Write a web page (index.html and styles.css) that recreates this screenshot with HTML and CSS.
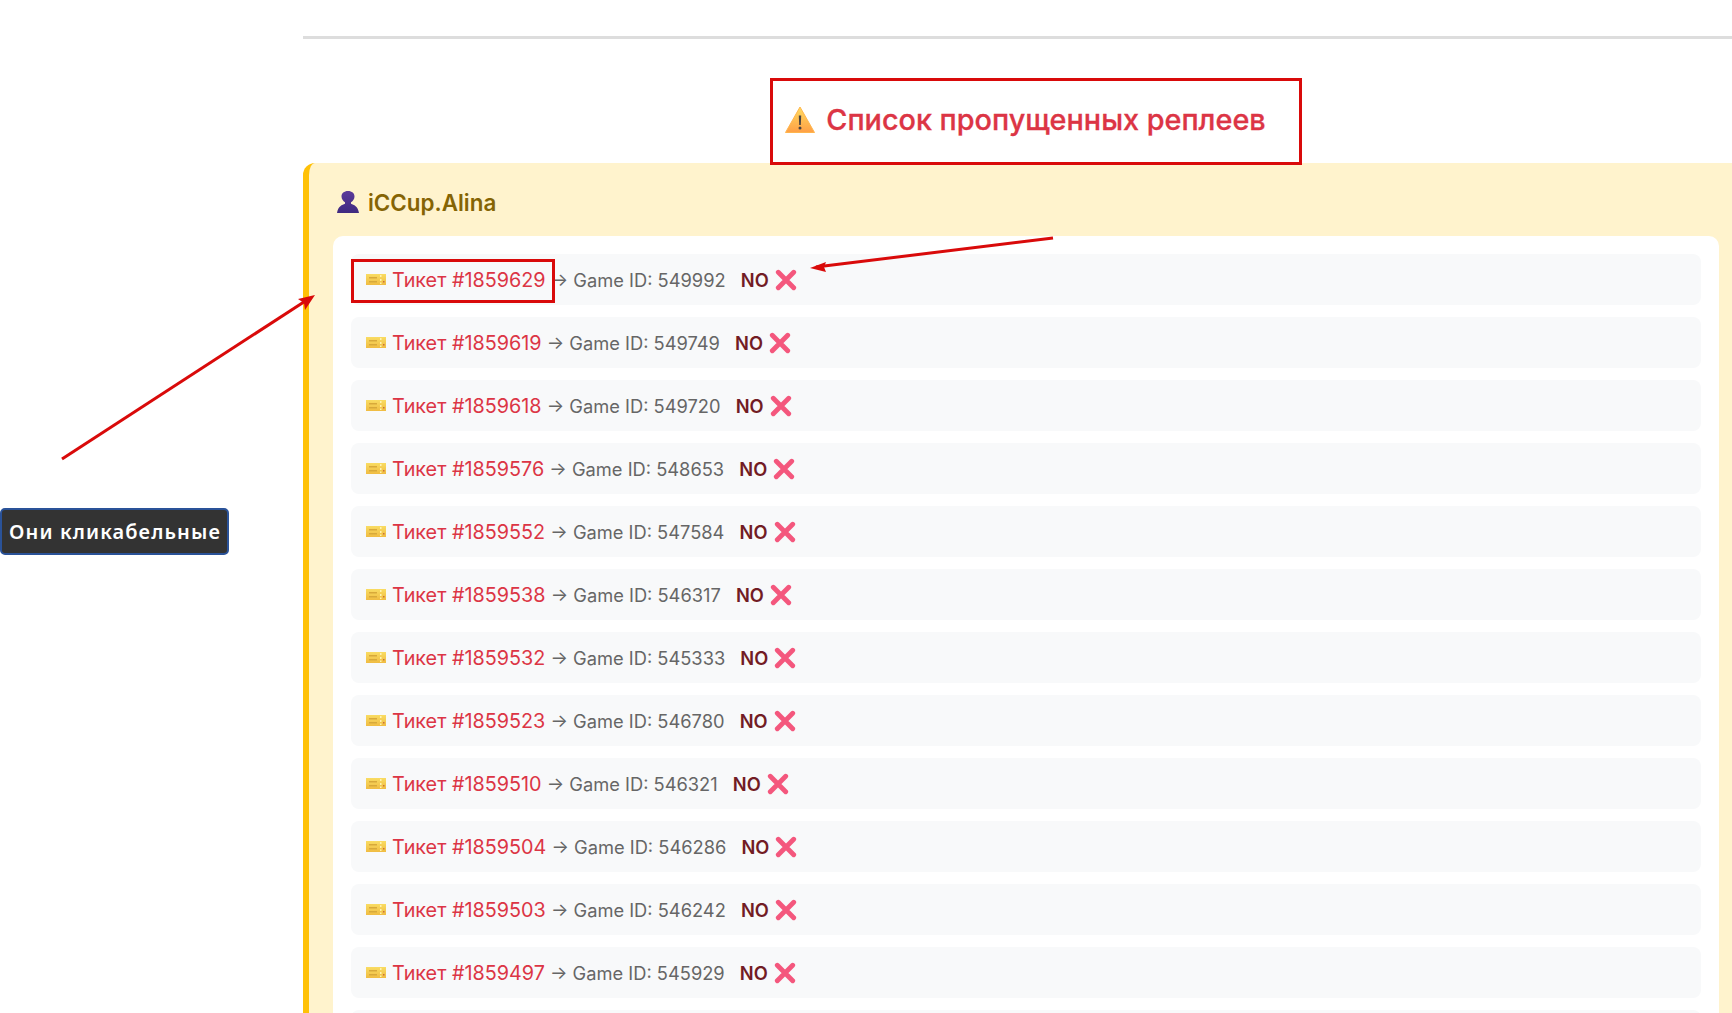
FILE: index.html
```html
<!DOCTYPE html>
<html lang="en">
<head>
  <meta charset="UTF-8" />
  <title>Список пропущенных реплеев</title>
  <link rel="stylesheet" href="styles.css">
</head>
<body>
  <!-- icons -->
  <svg class="sprite" width="0" height="0">
    <defs>
      <linearGradient id="ticketFill" x1="0" y1="0" x2="0" y2="1">
        <stop offset="0" stop-color="#f9dc62"/>
        <stop offset="1" stop-color="#f0bc42"/>
      </linearGradient>
      <linearGradient id="warnFill" x1="0" y1="0" x2="0" y2="1">
        <stop offset="0" stop-color="#ffdc60"/>
        <stop offset="1" stop-color="#ff9f45"/>
      </linearGradient>
      <linearGradient id="userFill" x1="0" y1="0" x2="0" y2="1">
        <stop offset="0" stop-color="#5c3a9a"/>
        <stop offset="1" stop-color="#3f2a80"/>
      </linearGradient>
    </defs>
    <symbol id="icon-ticket" viewBox="0 0 20 11">
      <path d="M0 0h20v11H0z" fill="url(#ticketFill)"/>
      <path d="M3 3h8v1.500H3zM3 7h8v1.500H3z" fill="#d8a93a"/>
      <path d="M14 1h1.500v2H14zM14 5h1.500v2H14zM14 8.500h1.500V10H14z" fill="#fff3b0"/>
      <path d="M17 7h1.500v1.500H17z" fill="#c9703a"/>
    </symbol>
    <symbol id="icon-cross" viewBox="0 0 20 20">
      <path d="M3 3l14 14M17 3L3 17" stroke="#f4577d" stroke-width="4.400" stroke-linecap="round" fill="none"/>
    </symbol>
  </svg>

  <main class="page">
    <hr class="divider">

    <h2 class="title">
      <svg class="title-icon" viewBox="0 0 30 27">
        <path d="M15 1L29.500 26.500H.5z" fill="url(#warnFill)" stroke="#ffb54d" stroke-linejoin="round"/>
        <path d="M13.800 9.500h2.400l-.4 9.500h-1.600z" fill="#4a4340"/>
        <circle cx="15" cy="22" r="1.500" fill="#4a4340"/>
      </svg>
      Список пропущенных реплеев
    </h2>

    <section class="user-panel">
      <h3 class="user-name">
        <svg class="user-icon" viewBox="0 0 22 22">
          <path d="M11 0c4 0 6.500 2.300 6.500 5.500 0 2.500-1.500 4.500-3.500 5.700v1.500c2.800 1 6.900 2.300 8 9.300H0c1.100-7 5.200-8.300 8-9.300v-1.500C6 10 4.500 8 4.500 5.500 4.500 2.300 7 0 11 0z" fill="url(#userFill)"/>
        </svg>
        iCCup.Alina
      </h3>

      <ul class="ticket-list">
        <li class="ticket-row"><svg class="ticket-icon"><use href="#icon-ticket"/></svg><a class="ticket-link" href="#">Тикет #1859629</a> → Game ID: 549992 <span class="no-label">NO</span><svg class="cross-icon"><use href="#icon-cross"/></svg></li>
        <li class="ticket-row"><svg class="ticket-icon"><use href="#icon-ticket"/></svg><a class="ticket-link" href="#">Тикет #1859619</a> → Game ID: 549749 <span class="no-label">NO</span><svg class="cross-icon"><use href="#icon-cross"/></svg></li>
        <li class="ticket-row"><svg class="ticket-icon"><use href="#icon-ticket"/></svg><a class="ticket-link" href="#">Тикет #1859618</a> → Game ID: 549720 <span class="no-label">NO</span><svg class="cross-icon"><use href="#icon-cross"/></svg></li>
        <li class="ticket-row"><svg class="ticket-icon"><use href="#icon-ticket"/></svg><a class="ticket-link" href="#">Тикет #1859576</a> → Game ID: 548653 <span class="no-label">NO</span><svg class="cross-icon"><use href="#icon-cross"/></svg></li>
        <li class="ticket-row"><svg class="ticket-icon"><use href="#icon-ticket"/></svg><a class="ticket-link" href="#">Тикет #1859552</a> → Game ID: 547584 <span class="no-label">NO</span><svg class="cross-icon"><use href="#icon-cross"/></svg></li>
        <li class="ticket-row"><svg class="ticket-icon"><use href="#icon-ticket"/></svg><a class="ticket-link" href="#">Тикет #1859538</a> → Game ID: 546317 <span class="no-label">NO</span><svg class="cross-icon"><use href="#icon-cross"/></svg></li>
        <li class="ticket-row"><svg class="ticket-icon"><use href="#icon-ticket"/></svg><a class="ticket-link" href="#">Тикет #1859532</a> → Game ID: 545333 <span class="no-label">NO</span><svg class="cross-icon"><use href="#icon-cross"/></svg></li>
        <li class="ticket-row"><svg class="ticket-icon"><use href="#icon-ticket"/></svg><a class="ticket-link" href="#">Тикет #1859523</a> → Game ID: 546780 <span class="no-label">NO</span><svg class="cross-icon"><use href="#icon-cross"/></svg></li>
        <li class="ticket-row"><svg class="ticket-icon"><use href="#icon-ticket"/></svg><a class="ticket-link" href="#">Тикет #1859510</a> → Game ID: 546321 <span class="no-label">NO</span><svg class="cross-icon"><use href="#icon-cross"/></svg></li>
        <li class="ticket-row"><svg class="ticket-icon"><use href="#icon-ticket"/></svg><a class="ticket-link" href="#">Тикет #1859504</a> → Game ID: 546286 <span class="no-label">NO</span><svg class="cross-icon"><use href="#icon-cross"/></svg></li>
        <li class="ticket-row"><svg class="ticket-icon"><use href="#icon-ticket"/></svg><a class="ticket-link" href="#">Тикет #1859503</a> → Game ID: 546242 <span class="no-label">NO</span><svg class="cross-icon"><use href="#icon-cross"/></svg></li>
        <li class="ticket-row"><svg class="ticket-icon"><use href="#icon-ticket"/></svg><a class="ticket-link" href="#">Тикет #1859497</a> → Game ID: 545929 <span class="no-label">NO</span><svg class="cross-icon"><use href="#icon-cross"/></svg></li>
        <li class="ticket-row"></li>
      </ul>
    </section>
  </main>

  <!-- screenshot annotations drawn over the page -->
  <div class="mark mark-title"></div>
  <div class="mark mark-ticket"></div>
  <div class="note">Они кликабельные</div>
  <svg class="arrows" width="1732" height="1013">
    <path d="M62 459L310 298" stroke="#d90a0a" stroke-width="3" fill="none"/>
    <path d="M315 295L298 299L304 303L305 310z" fill="#d90a0a"/>
    <path d="M1053 238L816 267" stroke="#d90a0a" stroke-width="3" fill="none"/>
    <path d="M810 268L826 262L824 267L826 272z" fill="#d90a0a"/>
  </svg>
</body>
</html>
```

FILE: styles.css
```css
html, body {
  height: 100%;
  overflow: hidden;
}

body {
  margin: 0;
  background: #fff;
  font-family: 'Inter', 'Noto Sans', sans-serif;
}

.sprite {
  position: absolute;
}

.page {
  width: 1440px;
  margin-left: 303px;
  padding-top: 36px;
}

.divider {
  height: 3px;
  margin: 0;
  border: 0;
  background-color: #ddd;
}

.title {
  display: flex;
  align-items: center;
  justify-content: center;
  gap: 11px;
  height: 124px;
  margin: 0;
  padding: 36px 0 0 5px;
  box-sizing: border-box;
  color: #dc3545;
  font-size: 28.800px;
  font-weight: 500;
  -webkit-text-stroke: 0.3px #dc3545;
}

.title-icon {
  width: 30px;
  height: 27px;
}

.user-panel {
  padding: 19px 24px 24px 24px;
  background-color: #fff3cd;
  border-left: 6px solid #ffc107;
  border-radius: 12px 0 0 0;
}

.user-name {
  display: flex;
  align-items: center;
  gap: 9px;
  height: 40px;
  margin: 0 0 14px 4px;
  color: #856404;
  font-size: 22.400px;
  font-weight: 600;
}

.user-icon {
  width: 22px;
  height: 22px;
}

.ticket-list {
  display: flex;
  flex-direction: column;
  gap: 12px;
  margin: 0;
  padding: 18px;
  list-style: none;
  background-color: #fff;
  border-radius: 10px;
}

.ticket-row {
  display: flex;
  align-items: center;
  height: 51px;
  padding-left: 15px;
  background-color: #f8f9fa;
  border-radius: 8px;
  color: #666;
  font-size: 18.300px;
  white-space: pre;
}

.ticket-icon {
  width: 20px;
  height: 11px;
  margin-right: 6px;
}

.ticket-link {
  color: #dc3545;
  font-size: 19.800px;
  text-decoration: none;
}

.no-label {
  margin-left: 10px;
  color: #721c24;
  font-weight: 600;
}

.cross-icon {
  width: 22px;
  height: 22px;
  margin-left: 6px;
}

/* annotations */
.mark {
  position: absolute;
  border: 3px solid #d90a0a;
  box-sizing: border-box;
}

.mark-title {
  left: 770px;
  top: 78px;
  width: 532px;
  height: 87px;
}

.mark-ticket {
  left: 351px;
  top: 259px;
  width: 204px;
  height: 44px;
}

.note {
  position: absolute;
  left: 0;
  top: 508px;
  width: 229px;
  height: 47px;
  box-sizing: border-box;
  padding-left: 7px;
  background-color: #333;
  border: 2px solid #2a5298;
  border-radius: 5px;
  color: #fff;
  font-family: 'Noto Sans', sans-serif;
  font-size: 20px;
  font-weight: 600;
  line-height: 43px;
  letter-spacing: 1.100px;
  white-space: nowrap;
}

.arrows {
  position: absolute;
  left: 0;
  top: 0;
  pointer-events: none;
}
```
